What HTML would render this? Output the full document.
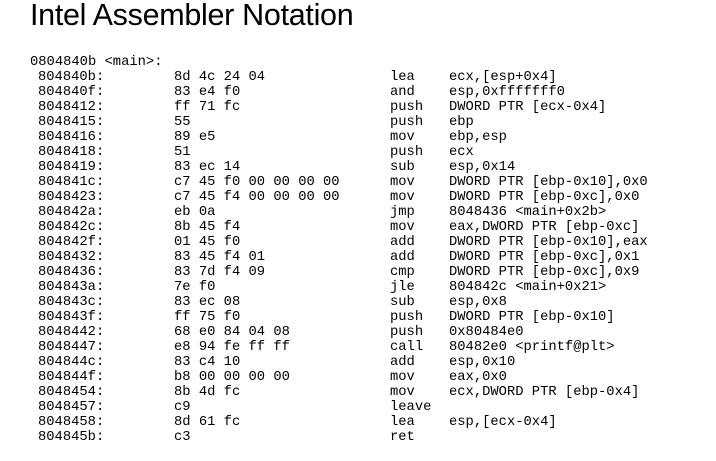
<!DOCTYPE html>
<html><head><meta charset="utf-8"><style>
body{margin:0;width:716px;height:461px;background:#fff;overflow:hidden;position:relative;}
h1{position:absolute;left:30px;top:-3px;margin:0;font:30.5px "Liberation Sans",sans-serif;color:#000;letter-spacing:-0.3px;line-height:36px;}
.code{position:absolute;left:0;top:1px;font:13.8px "Liberation Mono",monospace;color:#000;}
.r{position:absolute;height:15px;line-height:15px;white-space:pre;width:716px;}
.r span{position:absolute;top:0;}
.a{left:38px}.b{left:174px}.m{left:390px}.o{left:449px}
</style></head><body>
<h1>Intel Assembler Notation</h1>
<div class="code">
<div class="r" style="top:54px"><span style="left:30px">0804840b &lt;main&gt;:</span></div>
<div class="r" style="top:69px"><span class="a">804840b:</span><span class="b">8d 4c 24 04</span><span class="m">lea</span><span class="o">ecx,[esp+0x4]</span></div>
<div class="r" style="top:84px"><span class="a">804840f:</span><span class="b">83 e4 f0</span><span class="m">and</span><span class="o">esp,0xfffffff0</span></div>
<div class="r" style="top:99px"><span class="a">8048412:</span><span class="b">ff 71 fc</span><span class="m">push</span><span class="o">DWORD PTR [ecx-0x4]</span></div>
<div class="r" style="top:114px"><span class="a">8048415:</span><span class="b">55</span><span class="m">push</span><span class="o">ebp</span></div>
<div class="r" style="top:129px"><span class="a">8048416:</span><span class="b">89 e5</span><span class="m">mov</span><span class="o">ebp,esp</span></div>
<div class="r" style="top:144px"><span class="a">8048418:</span><span class="b">51</span><span class="m">push</span><span class="o">ecx</span></div>
<div class="r" style="top:159px"><span class="a">8048419:</span><span class="b">83 ec 14</span><span class="m">sub</span><span class="o">esp,0x14</span></div>
<div class="r" style="top:174px"><span class="a">804841c:</span><span class="b">c7 45 f0 00 00 00 00</span><span class="m">mov</span><span class="o">DWORD PTR [ebp-0x10],0x0</span></div>
<div class="r" style="top:189px"><span class="a">8048423:</span><span class="b">c7 45 f4 00 00 00 00</span><span class="m">mov</span><span class="o">DWORD PTR [ebp-0xc],0x0</span></div>
<div class="r" style="top:204px"><span class="a">804842a:</span><span class="b">eb 0a</span><span class="m">jmp</span><span class="o">8048436 &lt;main+0x2b&gt;</span></div>
<div class="r" style="top:219px"><span class="a">804842c:</span><span class="b">8b 45 f4</span><span class="m">mov</span><span class="o">eax,DWORD PTR [ebp-0xc]</span></div>
<div class="r" style="top:234px"><span class="a">804842f:</span><span class="b">01 45 f0</span><span class="m">add</span><span class="o">DWORD PTR [ebp-0x10],eax</span></div>
<div class="r" style="top:249px"><span class="a">8048432:</span><span class="b">83 45 f4 01</span><span class="m">add</span><span class="o">DWORD PTR [ebp-0xc],0x1</span></div>
<div class="r" style="top:264px"><span class="a">8048436:</span><span class="b">83 7d f4 09</span><span class="m">cmp</span><span class="o">DWORD PTR [ebp-0xc],0x9</span></div>
<div class="r" style="top:279px"><span class="a">804843a:</span><span class="b">7e f0</span><span class="m">jle</span><span class="o">804842c &lt;main+0x21&gt;</span></div>
<div class="r" style="top:294px"><span class="a">804843c:</span><span class="b">83 ec 08</span><span class="m">sub</span><span class="o">esp,0x8</span></div>
<div class="r" style="top:309px"><span class="a">804843f:</span><span class="b">ff 75 f0</span><span class="m">push</span><span class="o">DWORD PTR [ebp-0x10]</span></div>
<div class="r" style="top:324px"><span class="a">8048442:</span><span class="b">68 e0 84 04 08</span><span class="m">push</span><span class="o">0x80484e0</span></div>
<div class="r" style="top:339px"><span class="a">8048447:</span><span class="b">e8 94 fe ff ff</span><span class="m">call</span><span class="o">80482e0 &lt;printf@plt&gt;</span></div>
<div class="r" style="top:354px"><span class="a">804844c:</span><span class="b">83 c4 10</span><span class="m">add</span><span class="o">esp,0x10</span></div>
<div class="r" style="top:369px"><span class="a">804844f:</span><span class="b">b8 00 00 00 00</span><span class="m">mov</span><span class="o">eax,0x0</span></div>
<div class="r" style="top:384px"><span class="a">8048454:</span><span class="b">8b 4d fc</span><span class="m">mov</span><span class="o">ecx,DWORD PTR [ebp-0x4]</span></div>
<div class="r" style="top:399px"><span class="a">8048457:</span><span class="b">c9</span><span class="m">leave</span></div>
<div class="r" style="top:414px"><span class="a">8048458:</span><span class="b">8d 61 fc</span><span class="m">lea</span><span class="o">esp,[ecx-0x4]</span></div>
<div class="r" style="top:429px"><span class="a">804845b:</span><span class="b">c3</span><span class="m">ret</span></div>
</div>
</body></html>
